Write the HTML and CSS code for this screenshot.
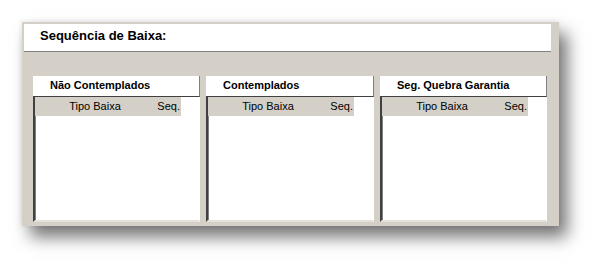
FILE: index.html
```html
<!DOCTYPE html>
<html lang="pt">
<head>
<meta charset="utf-8">
<title>Sequência de Baixa</title>
<link rel="stylesheet" href="styles.css">
</head>
<body>
<div class="panel">
  <div class="title">Sequência de Baixa:</div>
  <div class="columns">
    <div class="col">
      <div class="col-head">Não Contemplados</div>
      <div class="list">
        <div class="grid-head"><span class="h-tipo">Tipo Baixa</span><span class="h-seq">Seq.</span></div>
      </div>
    </div>
    <div class="col col-mid">
      <div class="col-head">Contemplados</div>
      <div class="list">
        <div class="grid-head"><span class="h-tipo">Tipo Baixa</span><span class="h-seq">Seq.</span></div>
      </div>
    </div>
    <div class="col">
      <div class="col-head">Seg. Quebra Garantia</div>
      <div class="list">
        <div class="grid-head"><span class="h-tipo">Tipo Baixa</span><span class="h-seq">Seq.</span></div>
      </div>
    </div>
  </div>
</div>
</body>
</html>
```
FILE: styles.css
```css
html, body {
  margin: 0;
  padding: 0;
  background: #ffffff;
}
body {
  padding: 22px 0 0 22px;
  min-height: 267px;
  box-sizing: border-box;
  font-family: "Liberation Sans", Arial, sans-serif;
}
.panel {
  width: 537px;
  height: 204px;
  box-sizing: border-box;
  background: #d4d0c8;
  padding: 2px 8px 0 2px;
  box-shadow: 8px 11px 16px rgba(0, 0, 0, 0.55), -1px -1px 5px rgba(0, 0, 0, 0.08);
}
.title {
  height: 27px;
  background: #ffffff;
  border-bottom: 1px solid #808080;
  box-sizing: content-box;
  font-weight: bold;
  font-size: 13px;
  line-height: 24px;
  padding-left: 16px;
  color: #000;
}
.columns {
  display: flex;
  gap: 6px;
  margin-top: 24px;
  padding-left: 9px;
}
.col {
  width: 167px;
  display: flex;
  flex-direction: column;
}
.col-mid {
  width: 168px;
}
.col-head {
  height: 20px;
  background: #ffffff;
  border-right: 1px solid #808080;
  border-bottom: 1px solid #404040;
  font-weight: bold;
  font-size: 11px;
  line-height: 19px;
  padding-left: 17px;
  color: #000;
}
.list {
  height: 125px;
  box-sizing: border-box;
  background: #ffffff;
  border-left: 2px solid #404040;
  border-right: 1px solid #ffffff;
  border-bottom: 2px solid #e4e1db;
  box-shadow: inset 1px 0 0 #808080, 1px 0 0 #d4d0c8;
}
.grid-head {
  width: 146px;
  height: 19px;
  background: #d4d0c8;
  display: flex;
  font-size: 11px;
  line-height: 19px;
  color: #000;
}
.h-tipo {
  width: 120px;
  text-align: center;
}
.h-seq {
  flex: 1;
  text-align: right;
  padding-right: 1px;
}
```
